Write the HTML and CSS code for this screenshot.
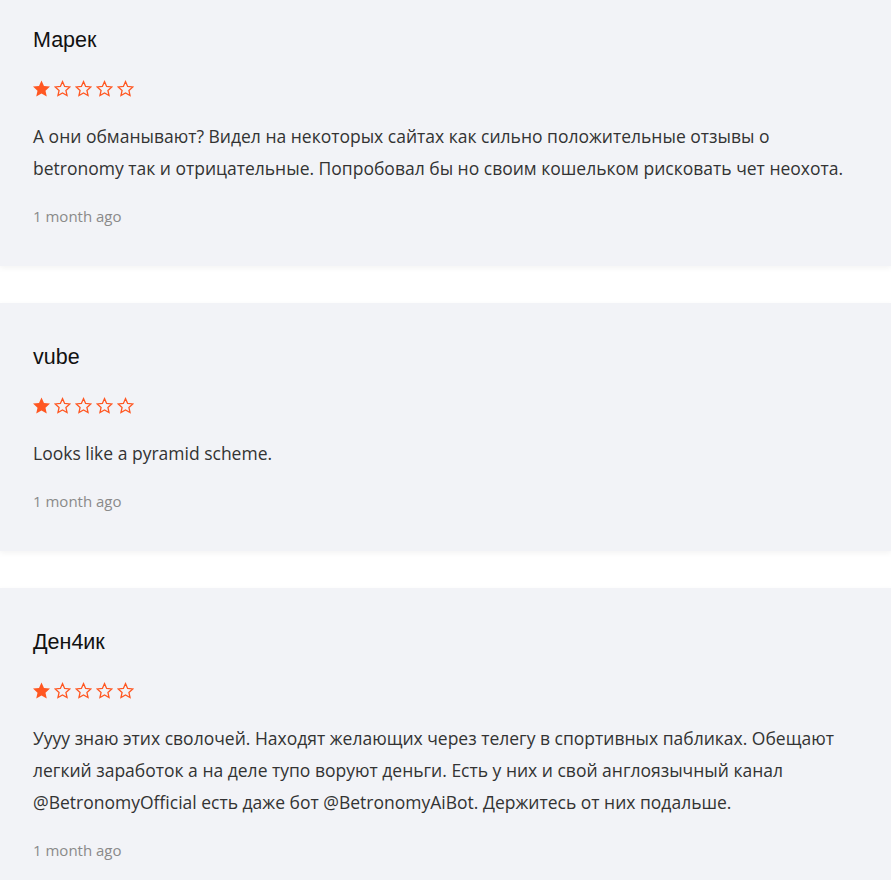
FILE: index.html
```html
<!DOCTYPE html>
<html lang="ru">
<head>
<meta charset="utf-8">
<title>Отзывы</title>
<link rel="stylesheet" href="styles.css">
</head>
<body>
<div class="reviews">
  <article class="review">
    <h3 class="name">Марек</h3>
    <div class="stars">
      <svg class="star" viewBox="0 0 17 17"><path class="full" d="M8.5 0.4L10.97 5.94L17 6.58L12.49 10.64L13.76 16.57L8.5 13.54L3.24 16.57L4.51 10.64L0 6.58L6.03 5.94Z"/></svg>
      <svg class="star" viewBox="0 0 17 17"><path class="empty" transform="translate(8.5 9.2) scale(0.86) translate(-8.5 -9.2)" d="M8.5 0.4L10.97 5.94L17 6.58L12.49 10.64L13.76 16.57L8.5 13.54L3.24 16.57L4.51 10.64L0 6.58L6.03 5.94Z"/></svg>
      <svg class="star" viewBox="0 0 17 17"><path class="empty" transform="translate(8.5 9.2) scale(0.86) translate(-8.5 -9.2)" d="M8.5 0.4L10.97 5.94L17 6.58L12.49 10.64L13.76 16.57L8.5 13.54L3.24 16.57L4.51 10.64L0 6.58L6.03 5.94Z"/></svg>
      <svg class="star" viewBox="0 0 17 17"><path class="empty" transform="translate(8.5 9.2) scale(0.86) translate(-8.5 -9.2)" d="M8.5 0.4L10.97 5.94L17 6.58L12.49 10.64L13.76 16.57L8.5 13.54L3.24 16.57L4.51 10.64L0 6.58L6.03 5.94Z"/></svg>
      <svg class="star" viewBox="0 0 17 17"><path class="empty" transform="translate(8.5 9.2) scale(0.86) translate(-8.5 -9.2)" d="M8.5 0.4L10.97 5.94L17 6.58L12.49 10.64L13.76 16.57L8.5 13.54L3.24 16.57L4.51 10.64L0 6.58L6.03 5.94Z"/></svg>
    </div>
    <p class="text">А они обманывают? Видел на некоторых сайтах как сильно положительные отзывы о betronomy так и отрицательные. Попробовал бы но своим кошельком рисковать чет неохота.</p>
    <div class="date">1 month ago</div>
  </article>
  <article class="review">
    <h3 class="name">vube</h3>
    <div class="stars">
      <svg class="star" viewBox="0 0 17 17"><path class="full" d="M8.5 0.4L10.97 5.94L17 6.58L12.49 10.64L13.76 16.57L8.5 13.54L3.24 16.57L4.51 10.64L0 6.58L6.03 5.94Z"/></svg>
      <svg class="star" viewBox="0 0 17 17"><path class="empty" transform="translate(8.5 9.2) scale(0.86) translate(-8.5 -9.2)" d="M8.5 0.4L10.97 5.94L17 6.58L12.49 10.64L13.76 16.57L8.5 13.54L3.24 16.57L4.51 10.64L0 6.58L6.03 5.94Z"/></svg>
      <svg class="star" viewBox="0 0 17 17"><path class="empty" transform="translate(8.5 9.2) scale(0.86) translate(-8.5 -9.2)" d="M8.5 0.4L10.97 5.94L17 6.58L12.49 10.64L13.76 16.57L8.5 13.54L3.24 16.57L4.51 10.64L0 6.58L6.03 5.94Z"/></svg>
      <svg class="star" viewBox="0 0 17 17"><path class="empty" transform="translate(8.5 9.2) scale(0.86) translate(-8.5 -9.2)" d="M8.5 0.4L10.97 5.94L17 6.58L12.49 10.64L13.76 16.57L8.5 13.54L3.24 16.57L4.51 10.64L0 6.58L6.03 5.94Z"/></svg>
      <svg class="star" viewBox="0 0 17 17"><path class="empty" transform="translate(8.5 9.2) scale(0.86) translate(-8.5 -9.2)" d="M8.5 0.4L10.97 5.94L17 6.58L12.49 10.64L13.76 16.57L8.5 13.54L3.24 16.57L4.51 10.64L0 6.58L6.03 5.94Z"/></svg>
    </div>
    <p class="text">Looks like a pyramid scheme.</p>
    <div class="date">1 month ago</div>
  </article>
  <article class="review">
    <h3 class="name">Ден4ик</h3>
    <div class="stars">
      <svg class="star" viewBox="0 0 17 17"><path class="full" d="M8.5 0.4L10.97 5.94L17 6.58L12.49 10.64L13.76 16.57L8.5 13.54L3.24 16.57L4.51 10.64L0 6.58L6.03 5.94Z"/></svg>
      <svg class="star" viewBox="0 0 17 17"><path class="empty" transform="translate(8.5 9.2) scale(0.86) translate(-8.5 -9.2)" d="M8.5 0.4L10.97 5.94L17 6.58L12.49 10.64L13.76 16.57L8.5 13.54L3.24 16.57L4.51 10.64L0 6.58L6.03 5.94Z"/></svg>
      <svg class="star" viewBox="0 0 17 17"><path class="empty" transform="translate(8.5 9.2) scale(0.86) translate(-8.5 -9.2)" d="M8.5 0.4L10.97 5.94L17 6.58L12.49 10.64L13.76 16.57L8.5 13.54L3.24 16.57L4.51 10.64L0 6.58L6.03 5.94Z"/></svg>
      <svg class="star" viewBox="0 0 17 17"><path class="empty" transform="translate(8.5 9.2) scale(0.86) translate(-8.5 -9.2)" d="M8.5 0.4L10.97 5.94L17 6.58L12.49 10.64L13.76 16.57L8.5 13.54L3.24 16.57L4.51 10.64L0 6.58L6.03 5.94Z"/></svg>
      <svg class="star" viewBox="0 0 17 17"><path class="empty" transform="translate(8.5 9.2) scale(0.86) translate(-8.5 -9.2)" d="M8.5 0.4L10.97 5.94L17 6.58L12.49 10.64L13.76 16.57L8.5 13.54L3.24 16.57L4.51 10.64L0 6.58L6.03 5.94Z"/></svg>
    </div>
    <p class="text">Уууу знаю этих сволочей. Находят желающих через телегу в спортивных пабликах. Обещают легкий заработок а на деле тупо воруют деньги. Есть у них и свой англоязычный канал @BetronomyOfficial есть даже бот @BetronomyAiBot. Держитесь от них подальше.</p>
    <div class="date">1 month ago</div>
  </article>
</div>
</body>
</html>
```

FILE: styles.css
```css
html, body {
  margin: 0;
  padding: 0;
  background: #ffffff;
}

body {
  font-family: "Open Sans", "Liberation Sans", sans-serif;
  overflow: hidden;
}

.reviews {
  display: flex;
  flex-direction: column;
  gap: 37px;
  margin-top: -14px;
}

.review {
  background: #f2f3f7;
  padding: 41px 40px 39px 33px;
  box-shadow: 0 2px 6px rgba(0, 0, 0, 0.05);
}

.name {
  margin: 0;
  font-family: "Liberation Sans", Arial, sans-serif;
  font-weight: 400;
  font-size: 21.5px;
  line-height: 26px;
  color: #111111;
}

.stars {
  display: flex;
  gap: 4px;
  margin-top: 26px;
  height: 18px;
  align-items: center;
}

.star {
  width: 17px;
  height: 17px;
  display: block;
}

.full {
  fill: #ff5722;
}

.empty {
  fill: none;
  stroke: #ff5722;
  stroke-width: 1.5;
  stroke-linejoin: miter;
}

.text {
  margin: 23px 0 0;
  font-size: 17.5px;
  line-height: 32px;
  color: #333333;
}

.date {
  margin-top: 21px;
  font-size: 15px;
  line-height: 22px;
  color: #8a8a8a;
}
```
